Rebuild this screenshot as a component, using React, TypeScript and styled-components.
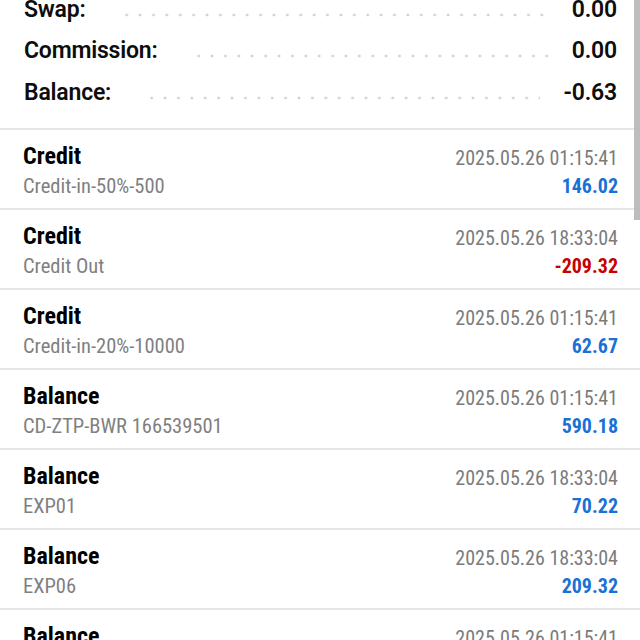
import React from 'react';
import styled, { createGlobalStyle } from 'styled-components';

const GlobalStyle = createGlobalStyle`
    html, body {
        margin:0;
        padding:0;
        background:#fff;
    }
    body {
        font-family:"Roboto Condensed", Roboto, "Liberation Sans", sans-serif;
        font-stretch:condensed;
        overflow:hidden;
    }
`

const PageBlock = styled.div`
    position:relative;
    width:640px;
    height:640px;
    overflow:hidden;
`

const ScrollThumb = styled.div`
    position:absolute;
    top:0;
    right:0;
    width:6px;
    height:220px;
    background:#bdbdbd;
`

const SummaryBlock = styled.div`
    margin-top:-11.5px;
    padding:0 23px 15px 24px;
    border-bottom:2px solid #e6e6e6;
`

const SummaryRow = styled.div`
    display:flex;
    align-items:baseline;
    height:41.5px;
    line-height:41.5px;
    font-family:Roboto, "Liberation Sans", sans-serif;
    font-stretch:normal;
    font-size:23px;
    font-weight:600;
    letter-spacing:-0.2px;
    color:#0d0d0d;
    .label {
        white-space:nowrap;
    }
    .dots {
        flex:1;
        align-self:stretch;
        margin:0 24px 0 34px;
        background-image:radial-gradient(circle, #d2d2d2 1.2px, transparent 1.7px);
        background-size:13.4px 4px;
        background-repeat:repeat-x;
        background-position:0 24px;
    }
`

const DealRow = styled.div`
    box-sizing:border-box;
    height:80px;
    padding:11px 22px 0 23px;
    border-bottom:2px solid #e6e6e6;
`

const Line = styled.div`
    display:flex;
    justify-content:space-between;
    align-items:baseline;
    height:30px;
    line-height:30px;
    white-space:nowrap;
`

const Title = styled.span`
    font-size:24px;
    font-weight:700;
    color:#000;
`

const Stamp = styled.span`
    font-size:20px;
    color:#7b7b7b;
    position:relative;
    top:1px;
`

const Comment = styled.span`
    font-size:20.5px;
    color:#808080;
`

const Amount = styled.span<{ $negative?: boolean }>`
    font-size:20px;
    font-weight:700;
    color:${({ $negative }) => ($negative ? '#c80000' : '#1a70d6')};
`

const summary = [
    { label: 'Swap:', value: '0.00' },
    { label: 'Commission:', value: '0.00' },
    { label: 'Balance:', value: '-0.63' },
];

const deals = [
    { type: 'Credit', comment: 'Credit-in-50%-500', time: '2025.05.26 01:15:41', amount: '146.02' },
    { type: 'Credit', comment: 'Credit Out', time: '2025.05.26 18:33:04', amount: '-209.32' },
    { type: 'Credit', comment: 'Credit-in-20%-10000', time: '2025.05.26 01:15:41', amount: '62.67' },
    { type: 'Balance', comment: 'CD-ZTP-BWR 166539501', time: '2025.05.26 01:15:41', amount: '590.18' },
    { type: 'Balance', comment: 'EXP01', time: '2025.05.26 18:33:04', amount: '70.22' },
    { type: 'Balance', comment: 'EXP06', time: '2025.05.26 18:33:04', amount: '209.32' },
    { type: 'Balance', comment: 'EXP02', time: '2025.05.26 01:15:41', amount: '50.00' },
];

const App = () => {
    return (
        <PageBlock>
            <GlobalStyle />
            <SummaryBlock>
                {summary.map((s) => (
                    <SummaryRow key={s.label}>
                        <span className="label">{s.label}</span>
                        <span className="dots" />
                        <span>{s.value}</span>
                    </SummaryRow>
                ))}
            </SummaryBlock>
            {deals.map((d, i) => (
                <DealRow key={i}>
                    <Line>
                        <Title>{d.type}</Title>
                        <Stamp>{d.time}</Stamp>
                    </Line>
                    <Line>
                        <Comment>{d.comment}</Comment>
                        <Amount $negative={d.amount.startsWith('-')}>{d.amount}</Amount>
                    </Line>
                </DealRow>
            ))}
            <ScrollThumb />
        </PageBlock>
    )
}

export default App;
